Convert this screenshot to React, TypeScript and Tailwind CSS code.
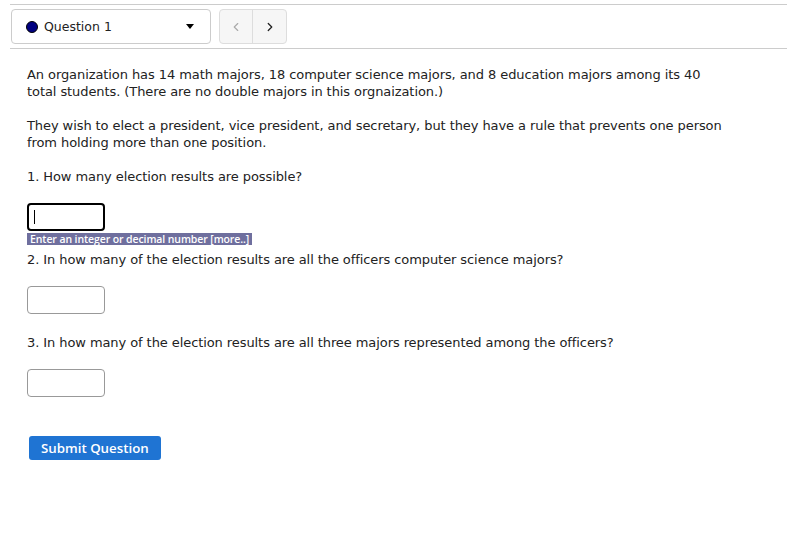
import { ChevronLeft, ChevronRight } from "lucide-react";

function AnswerBox({ focused }: { focused?: boolean }) {
  return (
    <div
      className={
        focused
          ? "flex h-[28px] w-[78px] items-center rounded-[4px] border-2 border-black px-[5px]"
          : "h-[28px] w-[78px] rounded-[4px] border border-[#999]"
      }
    >
      {focused && <div className="h-[14px] w-px bg-black" />}
    </div>
  );
}

export default function App() {
  return (
    <div className="min-h-[537px] bg-white font-['DejaVu_Sans',sans-serif] text-[13px] leading-[17px] tracking-[-0.08px] text-[#222]">
      {/* question nav */}
      <div className="pt-[4px] pl-[10px]">
        <div className="flex items-center gap-[8px] border-t border-b border-[#ccc] py-[4px] pl-px">
          <div className="flex h-[35px] w-[200px] items-center rounded-[4px] border border-[#ccc] bg-white px-[14px]">
            <span className="h-[12px] w-[12px] rounded-full border border-black bg-[#000080]" />
            <span className="ml-[6px] text-[12.5px] tracking-normal text-[#222]">Question 1</span>
            <span className="ml-auto mr-[2px] h-0 w-0 border-x-[4px] border-t-[5px] border-x-transparent border-t-black" />
          </div>
          <div className="flex h-[35px] overflow-hidden rounded-[4px] border border-[#ddd] bg-[#f6f6f6]">
            <div className="flex w-[33px] items-center justify-center border-r border-[#ddd] text-[#aaa]">
              <ChevronLeft size={14} strokeWidth={2} />
            </div>
            <div className="flex w-[33px] items-center justify-center text-[#222]">
              <ChevronRight size={14} strokeWidth={2.2} />
            </div>
          </div>
        </div>
      </div>

      {/* question body */}
      <div className="px-[27px] pt-[17px]">
        <p className="w-[740px]">
          An organization has 14 math majors, 18 computer science majors, and 8 education majors among its 40
          <br />
          total students. (There are no double majors in this orgnaization.)
        </p>
        <p className="mt-[17px] w-[740px]">
          They wish to elect a president, vice president, and secretary, but they have a rule that prevents one person
          <br />
          from holding more than one position.
        </p>
        <p className="mt-[17px]">1. How many election results are possible?</p>

        <div className="mt-[18px]">
          <AnswerBox focused />
        </div>
        <div className="mt-[2px] w-fit bg-[#6f6f9e] px-[3px] font-['Open_Sans',sans-serif] text-[10.5px] font-semibold leading-[12px] tracking-[-0.1px] text-white">
          Enter an integer or decimal number [more..]
        </div>

        <p className="mt-[6px]">2. In how many of the election results are all the officers computer science majors?</p>
        <div className="mt-[18px]">
          <AnswerBox />
        </div>

        <p className="mt-[20px]">3. In how many of the election results are all three majors represented among the officers?</p>
        <div className="mt-[18px]">
          <AnswerBox />
        </div>

        <button className="ml-[2px] mt-[39px] block h-[24px] rounded-[3px] bg-[#1f74d3] px-[12px] font-['Open_Sans',sans-serif] text-[13.3px] font-semibold leading-[24px] tracking-normal text-white">
          Submit Question
        </button>
      </div>
    </div>
  );
}
